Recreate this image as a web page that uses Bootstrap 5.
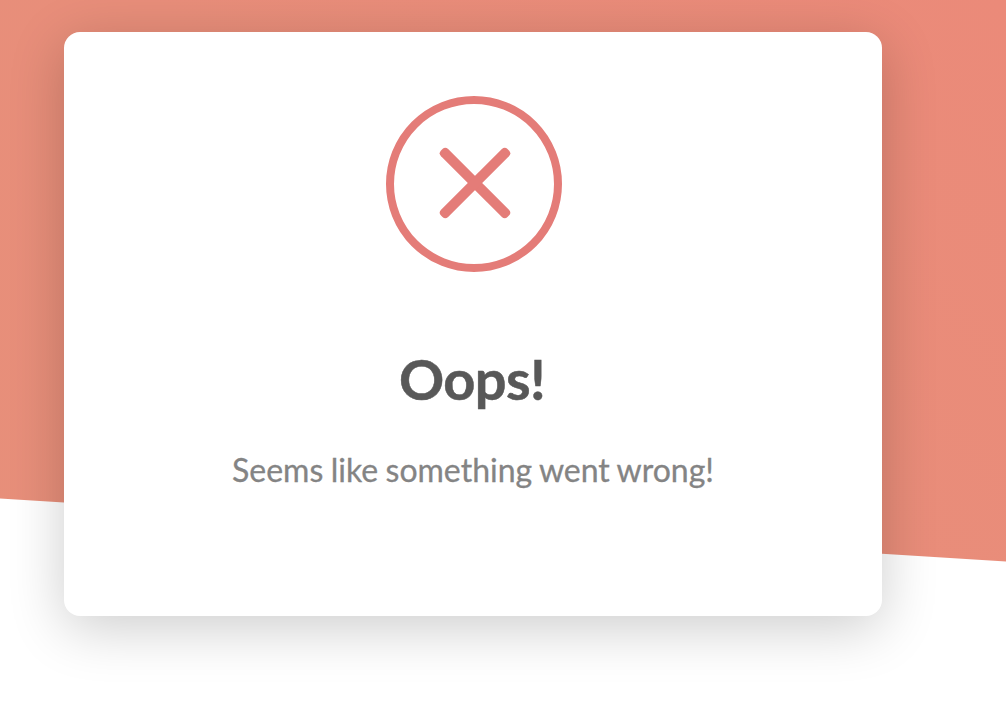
<!DOCTYPE html>
<html lang="en">
<head>
  <meta charset="UTF-8">
  <meta name="viewport" content="width=device-width, initial-scale=1.0">
  <title>Oops!</title>
  <link href="https://cdn.jsdelivr.net/npm/bootstrap@5.3.0/dist/css/bootstrap.min.css" rel="stylesheet">
  <style>
    body { font-family: Lato, sans-serif; background: #fff; }
    .page {
      position: relative; z-index: 0; height: 702px; padding: 32px 124px 86px 64px;
    }
    /* slanted backdrop behind the card */
    .page::before {
      content: ''; position: absolute; inset: 0; z-index: -1;
      background: linear-gradient(45deg, #e78f7a 0%, #e88e7a 50%, #eb8a79 100%);
      clip-path: polygon(0 0, 100% 0, 100% 561.5px, 0 498.5px);
    }
    .error-card {
      border: 0; border-radius: 16px; padding-top: 64px;
      box-shadow: 0 12px 56px rgba(0, 0, 0, .2);
    }
    .error-icon { margin-left: 2px; margin-bottom: 75px; }
    .error-title {
      font-size: 56px; line-height: 64px; color: #585858; margin-bottom: 39px;
      padding-right: 2px; letter-spacing: -.6px; -webkit-text-stroke: .5px #585858;
    }
    .error-text {
      font-size: 32px; line-height: 40px; color: #848484;
      word-spacing: -.8px; -webkit-text-stroke: .3px #848484;
    }
  </style>
</head>
<body>
  <main class="page overflow-hidden">
    <div class="card error-card h-100 align-items-center text-center">
      <svg class="error-icon" width="176" height="176" viewBox="0 0 176 176" fill="#e47c78">
        <circle cx="88" cy="88" r="84" fill="none" stroke="#e47c78" stroke-width="8"/>
        <g transform="translate(89 87)">
          <rect x="-47" y="-5" width="94" height="10" rx="4" transform="rotate(45)"/>
          <rect x="-47" y="-5" width="94" height="10" rx="4" transform="rotate(-45)"/>
        </g>
      </svg>
      <h1 class="error-title fw-bold">Oops!</h1>
      <p class="error-text mb-0">Seems like something went wrong!</p>
    </div>
  </main>
  <script src="https://cdn.jsdelivr.net/npm/bootstrap@5.3.0/dist/js/bootstrap.bundle.min.js"></script>
</body>
</html>
